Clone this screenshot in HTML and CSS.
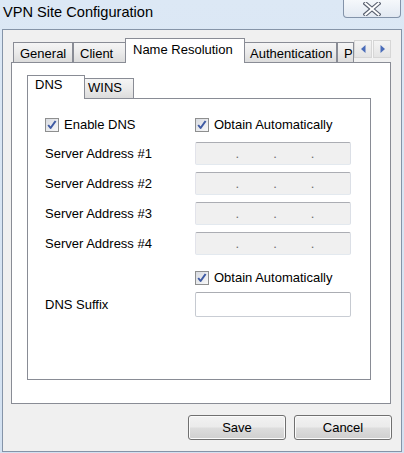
FILE: index.html
```html
<!DOCTYPE html>
<html lang="en">
<head>
<meta charset="utf-8">
<title>VPN Site Configuration</title>
<link rel="stylesheet" href="styles.css">
</head>
<body>
<div class="window">
  <header class="titlebar">
    <span class="title">VPN Site Configuration</span>
    <button class="close" aria-label="Close">
      <svg width="18" height="14" viewBox="0 0 18 14">
        <path d="M2.5 1.5 L15.5 12.5 M15.5 1.5 L2.5 12.5" stroke="#5a6170" stroke-width="4.2" stroke-linecap="square" fill="none"/>
        <path d="M2.5 1.5 L15.5 12.5 M15.5 1.5 L2.5 12.5" stroke="#ffffff" stroke-width="2" stroke-linecap="square" fill="none"/>
      </svg>
    </button>
  </header>
  <div class="client">
    <div class="tabctl">
      <div class="tabstrip">
        <div class="tab tab-general">General</div>
        <div class="tab tab-client">Client</div>
        <div class="tab tab-names is-active">Name Resolution</div>
        <div class="tab tab-auth">Authentication</div>
        <div class="tab tab-p">P</div>
        <div class="spin">
          <div class="spin-btn">
            <svg width="5" height="8" viewBox="0 0 5 8"><polygon points="4.5,0 4.5,8 0,4" fill="#4a6cb9"/></svg>
          </div>
          <div class="spin-btn">
            <svg width="5" height="8" viewBox="0 0 5 8"><polygon points="0.5,0 0.5,8 5,4" fill="#4a6cb9"/></svg>
          </div>
        </div>
      </div>
      <div class="tabpanel">
        <div class="subtabs">
          <div class="substrip">
            <div class="subtab subtab-dns is-active">DNS</div>
            <div class="subtab subtab-wins">WINS</div>
          </div>
          <div class="subpanel">
            <div class="row row-check">
              <label class="check"><span class="box"><svg width="12" height="12" viewBox="0 0 12 12"><path d="M2.2 6 L4.6 9 L9.6 2" stroke="#3e5aa3" stroke-width="2" fill="none" stroke-linejoin="round"/></svg></span>Enable DNS</label>
              <label class="check"><span class="box"><svg width="12" height="12" viewBox="0 0 12 12"><path d="M2.2 6 L4.6 9 L9.6 2" stroke="#3e5aa3" stroke-width="2" fill="none" stroke-linejoin="round"/></svg></span>Obtain Automatically</label>
            </div>
            <div class="row row-field first">
              <span class="label">Server Address #1</span>
              <div class="ip"><span>.</span><span>.</span><span>.</span></div>
            </div>
            <div class="row row-field">
              <span class="label">Server Address #2</span>
              <div class="ip"><span>.</span><span>.</span><span>.</span></div>
            </div>
            <div class="row row-field">
              <span class="label">Server Address #3</span>
              <div class="ip"><span>.</span><span>.</span><span>.</span></div>
            </div>
            <div class="row row-field">
              <span class="label">Server Address #4</span>
              <div class="ip"><span>.</span><span>.</span><span>.</span></div>
            </div>
            <div class="row row-auto">
              <span></span>
              <label class="check"><span class="box"><svg width="12" height="12" viewBox="0 0 12 12"><path d="M2.2 6 L4.6 9 L9.6 2" stroke="#3e5aa3" stroke-width="2" fill="none" stroke-linejoin="round"/></svg></span>Obtain Automatically</label>
            </div>
            <div class="row row-suffix">
              <span class="label">DNS Suffix</span>
              <div class="textbox"></div>
            </div>
          </div>
        </div>
      </div>
    </div>
    <div class="actions">
      <button class="btn">Save</button>
      <button class="btn">Cancel</button>
    </div>
  </div>
</div>
</body>
</html>
```
FILE: styles.css
```css
* { box-sizing: border-box; }
html, body { margin: 0; padding: 0; }
body {
  width: 404px;
  height: 453px;
  overflow: hidden;
  background: linear-gradient(#dce8f5, #d3e1f1);
  font-family: "Liberation Sans", Arial, sans-serif;
  font-size: 13px;
  color: #000;
}
.titlebar {
  display: flex;
  height: 29px;
}
.title {
  font-size: 14.6px;
  line-height: 17px;
  padding: 4px 0 0 3px;
}
.close {
  margin-left: auto;
  margin-right: 3px;
  width: 58px;
  height: 18px;
  padding: 0;
  border: 1px solid #8393a9;
  border-top: none;
  border-radius: 0 0 4px 4px;
  background: linear-gradient(#f5f8fb, #e2e9f2);
  display: flex;
  align-items: center;
  justify-content: center;
}
.client {
  margin-left: 2px;
  width: 400px;
  height: 423px;
  border: 1px solid #8594a8;
  background: #f0f0f0;
  padding: 8px 10px 0 8px;
  display: flex;
  flex-direction: column;
}
.tabctl { width: 380px; }
.tabstrip {
  display: flex;
  align-items: flex-end;
  height: 24px;
  padding-left: 2px;
}
.tab {
  flex: none;
  height: 20px;
  border: 1px solid #898c95;
  border-bottom: none;
  background: linear-gradient(#f5f5f5, #ebebeb 50%, #dcdcdc);
  padding: 3px 0 0 6px;
  line-height: 16px;
  white-space: nowrap;
  overflow: hidden;
}
.tab.is-active {
  height: 25px;
  margin: 0 -2px -1px -2px;
  background: #fff;
  padding-left: 7px;
  position: relative;
  z-index: 1;
}
.tab-general { width: 60px; }
.tab-client { width: 54px; }
.tab-names { width: 120px; }
.tab-auth { width: 94px; }
.tab-p { width: 17px; padding-left: 6px; }
.spin {
  flex: none;
  align-self: flex-start;
  margin-top: 2px;
  width: 37px;
  height: 18px;
  display: flex;
  gap: 1px;
  padding: 0;
  background: #f7f7f7;
}
.spin-btn {
  flex: 1;
  border: 1px solid #d6d6d6;
  background: linear-gradient(#f4f4f4, #e4e4e4);
  display: flex;
  align-items: center;
  justify-content: center;
}
.tabpanel {
  height: 342px;
  border: 1px solid #898c95;
  background: #fff;
  padding: 12px 0 0 15px;
}
.subtabs { width: 344px; }
.substrip {
  display: flex;
  align-items: flex-end;
  height: 23px;
}
.subtab {
  flex: none;
  height: 20px;
  border: 1px solid #898c95;
  border-bottom: none;
  background: linear-gradient(#f5f5f5, #ebebeb 50%, #dcdcdc);
  padding: 1px 0 0 4px;
  line-height: 16px;
}
.subtab.is-active {
  height: 24px;
  margin: 0 -2px -1px 0;
  background: #fff;
  padding-left: 7px;
  position: relative;
  z-index: 1;
}
.subtab-dns { width: 58px; }
.subtab-wins { width: 51px; }
.subpanel {
  height: 282px;
  border: 1px solid #898c95;
  padding: 18px 0 0 17px;
}
.row {
  display: grid;
  grid-template-columns: 150px 156px;
  align-items: center;
}
.row-check { height: 15px; }
.row-field { height: 23px; margin-top: 7px; }
.row-field.first { margin-top: 10px; }
.row-auto { height: 15px; margin-top: 15px; }
.row-suffix { height: 25px; margin-top: 7px; }
.label { line-height: 15px; white-space: nowrap; }
.check {
  display: flex;
  align-items: center;
  gap: 5px;
  line-height: 15px;
  white-space: nowrap;
}
.box {
  flex: none;
  width: 14px;
  height: 14px;
  border: 1px solid #8e8f8f;
  background: linear-gradient(135deg, #d8dbe1, #f8f8f8);
  display: flex;
  align-items: center;
  justify-content: center;
}
.ip {
  height: 23px;
  border: 1px solid;
  border-color: #abadb3 #dbdfe6 #e3e9ef #e2e3ea;
  border-radius: 2px;
  background: #f0f0f0;
  display: flex;
  justify-content: center;
  gap: 34px;
  padding-left: 4px;
  line-height: 21px;
  color: #6d6d6d;
}
.textbox {
  height: 25px;
  border: 1px solid;
  border-color: #abadb3 #c6cad1 #c9cdd4 #c6cad1;
  border-radius: 2px;
  background: #fff;
}
.actions {
  display: flex;
  justify-content: flex-end;
  gap: 8px;
  margin-top: 11px;
  margin-right: -1px;
}
.btn {
  width: 98px;
  height: 25px;
  padding: 0;
  border: 1px solid #707070;
  border-radius: 3px;
  background: linear-gradient(#f2f2f2 0%, #ebebeb 48%, #dddddd 52%, #cfcfcf 100%);
  box-shadow: inset 0 0 0 1px #fbfbfb;
  font-family: "Liberation Sans", Arial, sans-serif;
  font-size: 13px;
  color: #000;
}
```
